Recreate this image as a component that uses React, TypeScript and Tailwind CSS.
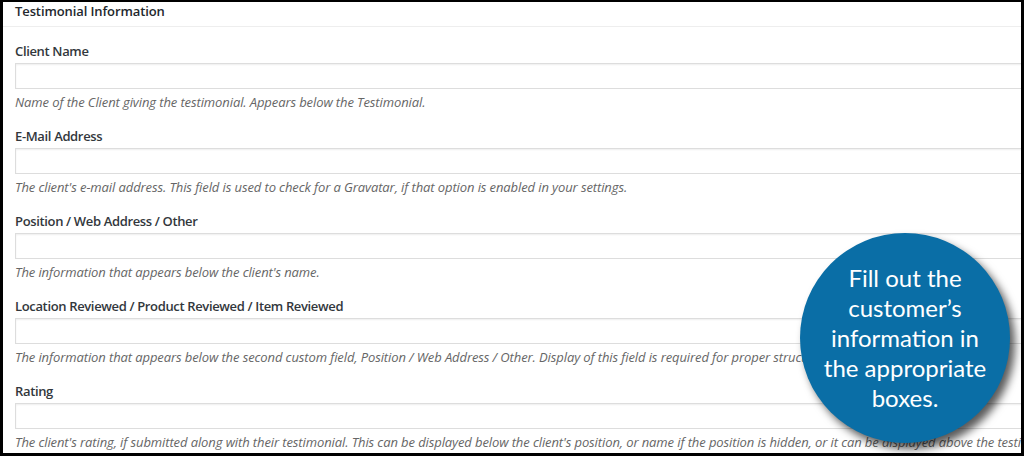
import React from "react";

const fields = [
  {
    label: "Client Name",
    desc: "Name of the Client giving the testimonial. Appears below the Testimonial.",
  },
  {
    label: "E-Mail Address",
    desc: "The client's e-mail address. This field is used to check for a Gravatar, if that option is enabled in your settings.",
  },
  {
    label: "Position / Web Address / Other",
    desc: "The information that appears below the client's name.",
  },
  {
    label: "Location Reviewed / Product Reviewed / Item Reviewed",
    desc: "The information that appears below the second custom field, Position / Web Address / Other. Display of this field is required for proper structured data output.",
  },
  {
    label: "Rating",
    desc: "The client's rating, if submitted along with their testimonial. This can be displayed below the client's position, or name if the position is hidden, or it can be displayed above the testimonial text.",
  },
];

export default function App() {
  return (
    <div className="w-[1024px] h-[456px] bg-black pt-[2px] pl-[3px] pr-[3px] pb-[3px]">
      <div
        className="relative w-full h-full bg-white overflow-hidden"
        style={{ fontFamily: '"Open Sans", "Noto Sans", sans-serif' }}
      >
        <div className="h-[25px] border-b border-[#eeeeee] px-[12px] flex items-start">
          <span className="text-[13px] font-semibold leading-[18px] text-[#23282d] tracking-[-0.1px]">
            Testimonial Information
          </span>
        </div>
        <div className="pl-[12px] pt-[14px]">
          {fields.map((f) => (
            <div key={f.label} className="mb-[15px]">
              <div className="text-[13px] font-semibold leading-[20px] text-[#32373c] tracking-[-0.35px] whitespace-nowrap">
                {f.label}
              </div>
              <div className="mt-[2px] h-[26px] w-[1040px] border border-[#dddddd] bg-white shadow-[inset_0_1px_2px_rgba(0,0,0,0.07)]" />
              <div className="mt-[4px] text-[13px] italic leading-[18px] text-[#666666] tracking-[-0.1px] whitespace-nowrap">
                {f.desc}
              </div>
            </div>
          ))}
        </div>
        <div className="absolute left-[797px] top-[231px] w-[210px] h-[210px] rounded-full bg-[#0a6ea6] shadow-[5px_6px_8px_rgba(0,0,0,0.65)] flex items-center justify-center">
          <div
            className="text-white text-[24px] leading-[30px] text-center"
            style={{ fontFamily: 'Lato, "Open Sans", sans-serif' }}
          >
            Fill out the
            <br />
            customer’s
            <br />
            information in
            <br />
            the appropriate
            <br />
            boxes.
          </div>
        </div>
      </div>
    </div>
  );
}
